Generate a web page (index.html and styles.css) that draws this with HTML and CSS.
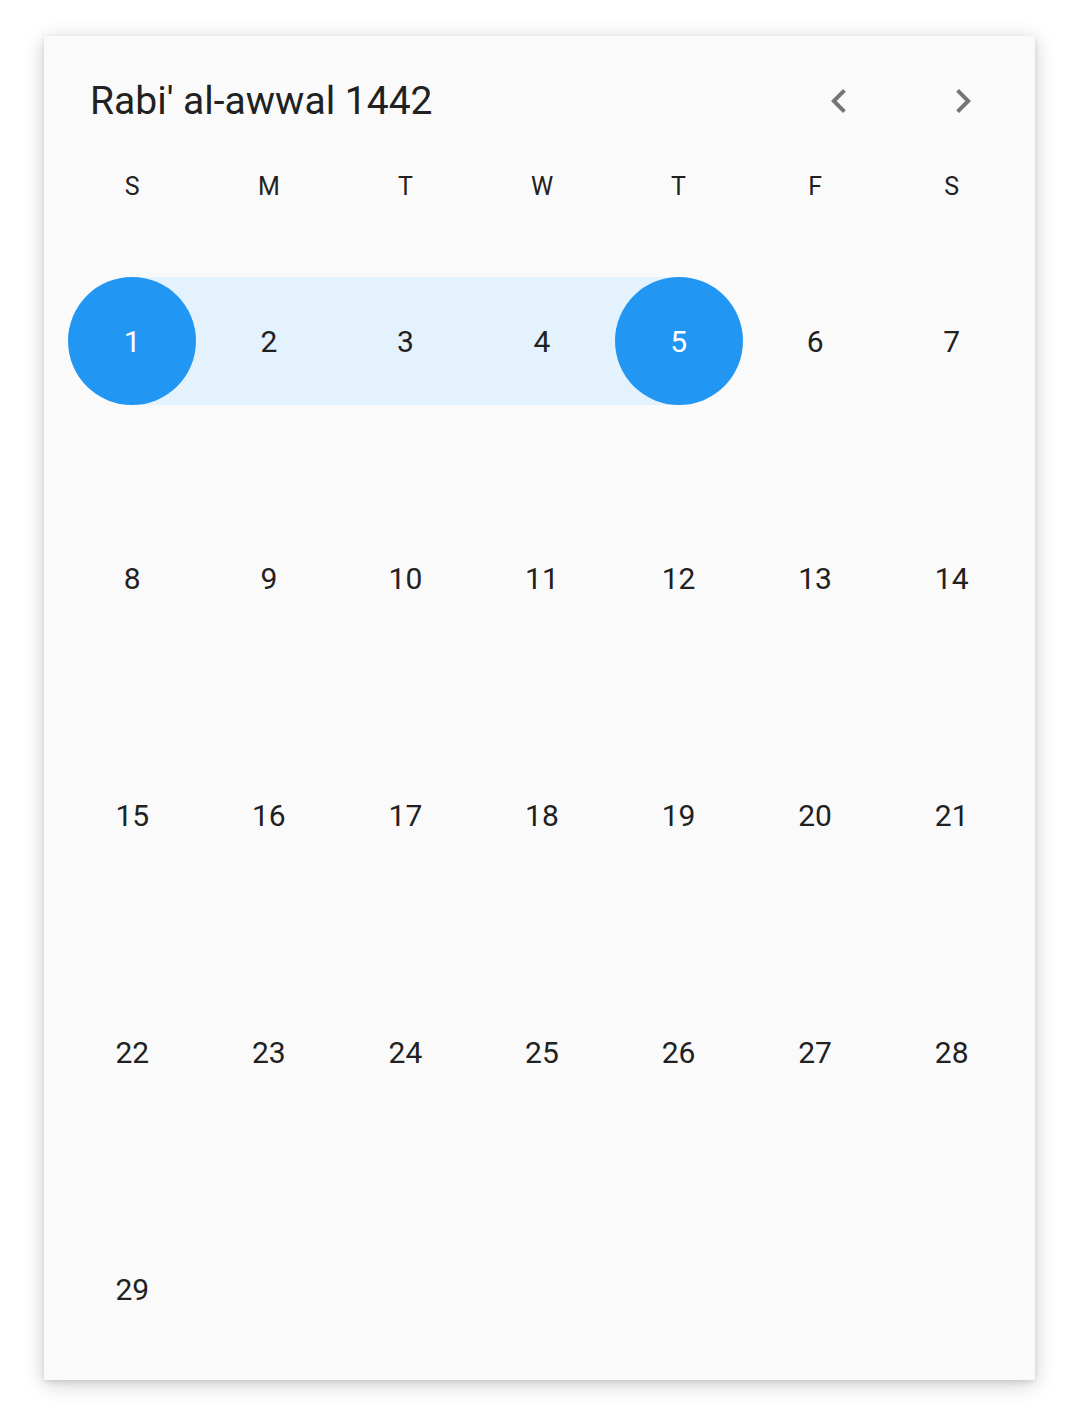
FILE: index.html
```html
<!DOCTYPE html>
<html lang="en">
<head>
<meta charset="utf-8">
<title>Hijri date range picker</title>
<link rel="stylesheet" href="styles.css">
</head>
<body>
<div class="picker">
  <div class="picker-head">
    <div class="month-title">Rabi' al-awwal 1442</div>
    <div class="nav">
      <button class="nav-btn" aria-label="Previous month">
        <svg viewBox="0 0 24 24" width="48" height="48"><path d="M15.41 7.41L14 6l-6 6 6 6 1.41-1.41L10.83 12z"/></svg>
      </button>
      <button class="nav-btn" aria-label="Next month">
        <svg viewBox="0 0 24 24" width="48" height="48"><path d="M10 6L8.59 7.41 13.17 12l-4.58 4.59L10 18l6-6z"/></svg>
      </button>
    </div>
  </div>

  <div class="weekdays">
    <span>S</span><span>M</span><span>T</span><span>W</span><span>T</span><span>F</span><span>S</span>
  </div>

  <div class="days">
    <div class="day range-start"><span class="num selected">1</span></div>
    <div class="day in-range"><span class="num">2</span></div>
    <div class="day in-range"><span class="num">3</span></div>
    <div class="day in-range"><span class="num">4</span></div>
    <div class="day range-end"><span class="num selected">5</span></div>
    <div class="day"><span class="num">6</span></div>
    <div class="day"><span class="num">7</span></div>

    <div class="day"><span class="num">8</span></div>
    <div class="day"><span class="num">9</span></div>
    <div class="day"><span class="num">10</span></div>
    <div class="day"><span class="num">11</span></div>
    <div class="day"><span class="num">12</span></div>
    <div class="day"><span class="num">13</span></div>
    <div class="day"><span class="num">14</span></div>

    <div class="day"><span class="num">15</span></div>
    <div class="day"><span class="num">16</span></div>
    <div class="day"><span class="num">17</span></div>
    <div class="day"><span class="num">18</span></div>
    <div class="day"><span class="num">19</span></div>
    <div class="day"><span class="num">20</span></div>
    <div class="day"><span class="num">21</span></div>

    <div class="day"><span class="num">22</span></div>
    <div class="day"><span class="num">23</span></div>
    <div class="day"><span class="num">24</span></div>
    <div class="day"><span class="num">25</span></div>
    <div class="day"><span class="num">26</span></div>
    <div class="day"><span class="num">27</span></div>
    <div class="day"><span class="num">28</span></div>

    <div class="day"><span class="num">29</span></div>
  </div>
</div>
</body>
</html>
```

FILE: styles.css
```css
html, body {
  margin: 0;
  padding: 0;
  background: #ffffff;
}

body {
  min-height: 1420px;
  padding-top: 36px;
  box-sizing: border-box;
  font-family: Roboto, "Noto Sans", "Liberation Sans", sans-serif;
  color: rgba(0, 0, 0, 0.87);
}

.picker {
  box-sizing: border-box;
  width: 991px;
  height: 1344px;
  margin-left: 44px;
  padding: 41px 15px 0 20px;
  background: #fafafa;
  box-shadow:
    0 2px 5px rgba(0, 0, 0, 0.10),
    0 4px 20px rgba(0, 0, 0, 0.20);
  overflow: hidden;
}

/* month title + navigation arrows */
.picker-head {
  display: flex;
  align-items: center;
  height: 48px;
  padding-left: 26px;
  padding-right: 33px;
}

.month-title {
  flex: 1;
  font-size: 39px;
  line-height: 48px;
  color: #212121;
}

.nav {
  display: flex;
  gap: 76px;
}

.nav-btn {
  width: 48px;
  height: 48px;
  padding: 0;
  border: 0;
  background: none;
  display: flex;
}

.nav-btn svg {
  fill: #757575;
}

/* weekday initials */
.weekdays {
  display: grid;
  grid-template-columns: repeat(7, 1fr);
  margin-top: 42px;
  height: 40px;
  font-size: 25px;
  line-height: 40px;
  text-align: center;
  color: #212121;
}

/* day grid */
.days {
  display: grid;
  grid-template-columns: repeat(7, 1fr);
  grid-auto-rows: 128px;
  row-gap: 109px;
  margin-top: 70px;
}

.day {
  display: flex;
  align-items: center;
  justify-content: center;
}

.day.in-range {
  background: #e3f2fd;
}

.day.range-start {
  background: linear-gradient(to right, transparent 50%, #e3f2fd 50%);
}

.day.range-end {
  background: linear-gradient(to right, #e3f2fd 50%, transparent 50%);
}

.num {
  width: 128px;
  height: 128px;
  border-radius: 50%;
  display: flex;
  align-items: center;
  justify-content: center;
  font-size: 30px;
  color: #212121;
}

.num.selected {
  background: #2196f3;
  color: #ffffff;
}
```
